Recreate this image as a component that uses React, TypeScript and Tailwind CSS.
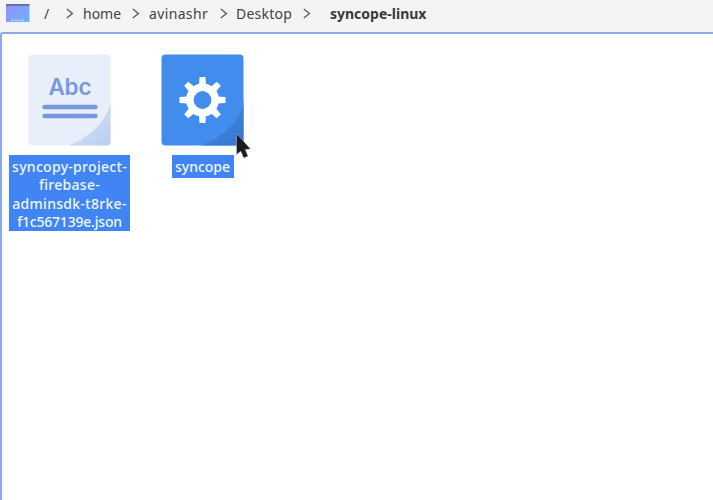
import React from "react";

function Chevron({ className }: { className: string }) {
  return (
    <svg className={`h-3 w-2 shrink-0 ${className}`} viewBox="0 0 8 12" fill="none" stroke="#5c5c5c" strokeWidth="1.4">
      <path d="M0.8 1 6.4 5.5 0.8 10" />
    </svg>
  );
}

function FolderIcon() {
  return (
    <svg className="ml-1.5 h-[19px] w-6 shrink-0" viewBox="0 0 24 19">
      <defs>
        <linearGradient id="folder" x1="0" y1="0" x2="1" y2="1">
          <stop offset="0" stopColor="#8f92f3" />
          <stop offset="0.45" stopColor="#859ff8" />
          <stop offset="1" stopColor="#66b4ff" />
        </linearGradient>
      </defs>
      <path d="M0 0H23.5V18H0Z" fill="url(#folder)" />
      <path d="M0 0H23.5V1.8H0Z" fill="#6669a3" />
      <path d="M5 16.3H18" stroke="#a9d3ff" strokeWidth="1.8" strokeDasharray="2.5 1" />
    </svg>
  );
}

function DocumentIcon() {
  return (
    <svg className="h-[92px] w-[83px]" viewBox="0 0 83 92">
      <defs>
        <linearGradient id="fold" x1="0.3" y1="0.3" x2="1" y2="1">
          <stop offset="0" stopColor="#d4e0f5" />
          <stop offset="1" stopColor="#b7cdef" />
        </linearGradient>
        <clipPath id="paper"><rect x="0.5" y="0.5" width="82" height="91" rx="4" /></clipPath>
      </defs>
      <g clipPath="url(#paper)">
        <path d="M0 0H83V92H0Z" fill="#e8effa" />
        <path d="M83 46C80 66 63 83 40 92H83Z" fill="url(#fold)" />
      </g>
      <text x="20.5" y="41" textLength="43" fontFamily="Inter, sans-serif" fontSize="22.5" fontWeight="600" fill="#7599dc">Abc</text>
      <path d="M16.5 53H67.5M16.5 62H67.5" stroke="#7599dc" strokeWidth="4.4" strokeLinecap="round" />
    </svg>
  );
}

const teeth = [0, 45, 90, 135, 180, 225, 270, 315];

function GearIcon() {
  return (
    <svg className="h-[92px] w-[83px]" viewBox="0 0 83 92">
      <defs>
        <linearGradient id="shade" x1="0.3" y1="0.2" x2="0.9" y2="1">
          <stop offset="0" stopColor="#3f87e4" />
          <stop offset="1" stopColor="#3776cd" />
        </linearGradient>
        <clipPath id="tile"><rect x="0.5" y="0.5" width="82" height="91" rx="4" /></clipPath>
      </defs>
      <g clipPath="url(#tile)">
        <path d="M0 0H83V92H0Z" fill="#418ced" />
        <path d="M83 46C80 66 63 83 40 92H83Z" fill="url(#shade)" />
      </g>
      <g transform="translate(41.5 46)">
        <circle r="12.7" fill="none" stroke="#fff" strokeWidth="7.6" />
        {teeth.map((angle) => (
          <path key={angle} d="M-3.6-14-2.9-23H2.9L3.6-14Z" fill="#fff" transform={`rotate(${angle})`} />
        ))}
      </g>
    </svg>
  );
}

export default function App() {
  return (
    <div className="flex h-[500px] w-[713px] flex-col overflow-hidden bg-[#f4f4f4] font-['Noto_Sans',sans-serif]">
      <nav className="flex h-8 shrink-0 items-start pt-1 text-[14px] leading-5 text-[#424242]">
        <FolderIcon />
        <span className="ml-3.5 w-[22px]">/</span>
        <Chevron className="mt-1" />
        <span className="ml-[9px] w-[49px]">home</span>
        <Chevron className="mt-1" />
        <span className="ml-[9px] w-[71px] tracking-[0.35px]">avinashr</span>
        <Chevron className="mt-1" />
        <span className="ml-2 w-[67px] tracking-[0.25px]">Desktop</span>
        <Chevron className="mt-1" />
        <span className="ml-[19px] font-bold whitespace-nowrap text-[#393939]">syncope-linux</span>
      </nav>
      <main className="relative flex flex-1 items-start rounded-tl-[3px] border-t-2 border-l-2 border-[#8ba9e3] bg-white pt-5 pl-[7px] text-center text-[14px] leading-[18.3px] font-medium text-[#eff7ff]">
        <div className="flex w-[121px] flex-col items-center">
          <DocumentIcon />
          <p className="mt-[9px] h-[76px] w-[121px] bg-[#4185f4] pt-[3px] tracking-[0.3px] whitespace-nowrap">
            syncopy-project-<br />firebase-<br />adminsdk-t8rke-<br /><span className="tracking-[-0.2px]">f1c567139e.json</span>
          </p>
        </div>
        <div className="ml-3 flex w-[121px] flex-col items-center">
          <GearIcon />
          <p className="mt-[9px] h-[23px] w-[62px] bg-[#4185f4] pt-[3px]">syncope</p>
        </div>
        <svg className="absolute top-[98px] left-[233px] h-[28px] w-[18px]" viewBox="0 0 18 28">
          <path d="M1.5 1.5V22.5L5.8 19.3 8.7 26 13 24.2 10.3 17.6 15.5 17Z" fill="#191b20" stroke="#c0c5ce" strokeWidth="0.5" />
        </svg>
      </main>
    </div>
  );
}
